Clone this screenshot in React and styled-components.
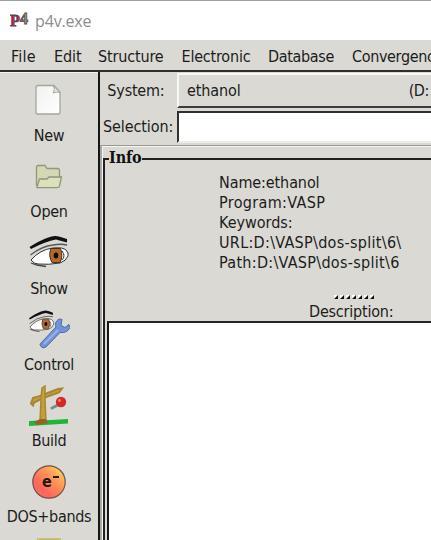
import React from "react";
import styled, { createGlobalStyle } from "styled-components";

const Global = createGlobalStyle`
  * { box-sizing: border-box; }
  html, body { margin: 0; height: 540px; overflow: hidden; background: #dad9d4; }
`;
const Window = styled.div`
  width: 431px; height: 540px; overflow: hidden;
  display: grid; grid-template-rows: 40px 30px 470px;
  background: #dad9d4; color: #1c1c1c;
  font: 16px/20px "DejaVu Sans Condensed", "DejaVu Sans", sans-serif;
  font-stretch: condensed;
`;
const TitleBar = styled.header`
  display: flex; align-items: center; gap: 5px; padding-left: 10px;
  background: #fff; border-top: 1px solid #a0a0a0; color: #8c8c8c;
  font: 16px/20px "Open Sans", sans-serif;
`;
const Label = styled.span`
  display: inline-block; white-space: nowrap;
  letter-spacing: ${(p) => p.$track ?? -0.4}px;
`;
const MenuBar = styled.nav`
  display: grid; grid-template-columns: 43px 44px 83.5px 86.5px 84px 100px;
  align-items: center; padding: 3px 0 0 11px; overflow: hidden;
`;
const Body = styled.main`
  display: grid; grid-template-columns: 98px 333px; min-height: 0;
  border-top: 2px solid #2e2e2e;
`;
const Toolbar = styled.aside`
  display: grid; grid-auto-rows: 76.3px; overflow: hidden;
  border-top: 1px solid #f4f3ef; padding-top: 7px;
`;
const Tool = styled.button`
  display: grid; grid-template-rows: 42px 20px; row-gap: 4px; align-content: start;
  place-items: center; border: 0; padding: 0; background: none; color: inherit; font: inherit;
`;
const Workspace = styled.section`
  border-left: 2px solid #161616; display: grid;
  grid-template-rows: 37px 36px 395px; min-width: 0;
`;
const Row = styled.div`
  display: grid; grid-template-columns: 74px 254px; align-items: center; padding-left: 3px;
`;
const Combo = styled.div`
  height: 35px; display: flex; align-items: center; justify-content: space-between;
  padding: 0 2px 0 8px; overflow: hidden;
  border-top: 2px solid #f7f7f3; border-left: 2px solid #f7f7f3; border-bottom: 2px solid #3b3b3b;
`;
const Entry = styled.div`
  height: 32px; background: #fff; border: 2px solid #303030; border-right: 0; border-bottom-color: #ecebe7;
`;
const Panel = styled.div`
  border-top: 1px solid #999894; border-left: 2px solid #aaa9a5;
  box-shadow: inset 1px 1px #f6f5f1; padding: 2px 0 0 1px;
`;
const Frame = styled.fieldset`
  margin: 0; padding: 0; min-width: 0; height: 394px;
  border: 2px solid #202020; border-right: 0; border-bottom: 0;
`;
const Legend = styled.legend`
  margin-left: 4px; padding: 0; height: 22px; line-height: 20px;
  font-family: "DejaVu Serif Condensed", "DejaVu Serif", serif; font-stretch: condensed;
  font-weight: 700; font-size: 16px; letter-spacing: -0.1px; color: #111;
`;
const Details = styled.div`
  display: grid; grid-auto-rows: 20px; padding: 3px 0 0 114px;
`;
const Grip = styled.div`
  display: flex; gap: 2px; margin: 22px 0 0 229px; height: 6px;
`;
const GripDot = styled.i`
  width: 4px; height: 4px;
  background: linear-gradient(135deg, #fff 48%, #111 52%);
`;
const Description = styled.div`padding: 1px 0 0 204px; height: 20px;`;
const TextArea = styled.div`
  height: 230px; margin-left: 2px; background: #fff; border-top: 2px solid #252525; border-left: 2px solid #151515;
`;

const FileIcon = () => (
  <svg width="42" height="42" viewBox="0 0 42 42">
    <defs><linearGradient id="paper" x2="1" y2="1"><stop stopColor="#f1f1ee"/><stop offset="1" stopColor="#fff"/></linearGradient></defs>
    <path d="M10 5.5h16l6 6.5v20a2 2 0 0 1-2 2H10a2 2 0 0 1-2-2v-24.5a2 2 0 0 1 2-2Z" fill="url(#paper)" stroke="#a5a79f" strokeWidth="1.3"/>
    <path d="M25.5 6q2 4-.5 7 3-1.5 7-.5Z" fill="#e8e8e3" stroke="#a5a79f"/>
  </svg>
);
const FolderIcon = () => (
  <svg width="42" height="42" viewBox="0 0 42 42">
    <path d="M8.5 30V11.5q0-2 2-2H17l2 3h10.5q2 0 2 2V28" fill="#d4d8b5" stroke="#91987a" strokeWidth="1.3"/>
    <path d="m9 31 2.5-8H19l2-2h12.5L31.500 30q-.3 1.700-2.500 1.700H10Q8.500 32 9 31Z" fill="#dce0bd" stroke="#8f9778" strokeWidth="1.3"/>
  </svg>
);
const EyeShape = () => (
  <g>
    <path d="M1.500 14C9 9.500 18 4 27 3q2-.5 12 3v3.500L28 6.500Q18 8 3 16Z" fill="#111"/>
    <path d="M3 27Q12 16.500 25 15q10-1 13 2 3 3 2 6-2 5-8 7-12 2-22 1-4 0-7-4Z" fill="#fff" stroke="#333"/>
    <path d="M2.500 22Q14 13 25 12q8-1.500 14 0" fill="none" stroke="#555" strokeWidth="1.3"/>
    <path d="M23 15.500h9.500q3 7-.5 14h-8q-4-7-1-14Z" fill="#b3682d" stroke="#463124"/>
    <ellipse cx="28" cy="22.500" rx="2.300" ry="3" fill="#120a06"/>
    <path d="M34 18q4 5 0 9" fill="none" stroke="#333"/>
    <path d="m3 30 6 2 9 1.500" fill="none" stroke="#444" strokeWidth="1.3"/>
  </g>
);
const EyeIcon = () => <svg width="42" height="42" viewBox="0 0 42 42"><EyeShape /></svg>;
const ControlIcon = () => (
  <svg width="42" height="42" viewBox="0 0 42 42">
    <g transform="translate(0 -.5) scale(.64 .69)"><EyeShape /></g>
    <path d="M13 34 28 18q-2-5 3-8l3 .5-1 6 4 2 4-3 1 3q-3 6-10 5L18 38q-3 2-5-.5t0-3.500Z" fill="#7194d8" stroke="#526ba5"/>
    <path d="m16 35 14-14" stroke="#9ab2e4" strokeWidth="2"/>
  </svg>
);
const BuildIcon = () => (
  <svg width="42" height="42" viewBox="0 0 42 42">
    <path d="m1 36 22-1 17-1v4.500L1 41Z" fill="#20b438"/>
    <path d="m5 13 7-2 18-7 4-.5-3 4-17 6-8 4-1 3-2-2Z" fill="#c6a23b" stroke="#a78731" strokeWidth="2"/>
    <path d="m14 3 3-2v14l1 22h-6l1-23Z" fill="#c5a33c" stroke="#a78731" strokeWidth="1.5"/>
    <path d="m13 16 4 4-4 4 4 4-4 4 4 4M9 13l5 0M20 9l5-1" stroke="#b89639" fill="none"/>
    <path d="m6 37 6-3h6l2 4-11 2Z" fill="#966126"/>
    <path d="m24 23 6-3" stroke="#788c8c" strokeWidth="3" strokeLinecap="round"/>
    <circle cx="33" cy="17" r="5.200" fill="#d52724"/><circle cx="31.500" cy="15.500" r="1.400" fill="#ff8170"/>
  </svg>
);
const ElectronText = styled.text`
  font-family: "DejaVu Sans", sans-serif; font-size: 16px; font-weight: 700; fill: #241614;
`;
const BandsIcon = () => (
  <svg width="42" height="42" viewBox="0 0 42 42">
    <defs><linearGradient id="electron" x1="0" y1="1" x2="1" y2="0"><stop offset=".3" stopColor="#ff675c"/><stop offset=".65" stopColor="#ff9a55"/><stop offset="1" stopColor="#fff25b"/></linearGradient></defs>
    <circle cx="21" cy="21" r="16.200" fill="url(#electron)" stroke="#6c544a" strokeWidth="1.200"/>
    <ElectronText x="14" y="26">e</ElectronText><path d="M25 16h6" stroke="#241614" strokeWidth="2"/>
  </svg>
);
const NextIcon = () => <svg width="42" height="42" viewBox="0 0 42 42"><path d="M9 0h24v8H9Z" fill="#c8bd70"/></svg>;
const LogoText = styled.text`
  font-family: "Liberation Serif", serif; font-weight: 700;
  font-size: ${(p) => p.$size}px; fill: ${(p) => p.$color}; stroke: #55465b; stroke-width: .8px;
`;
const Logo = () => (
  <svg width="20" height="24" viewBox="0 -4 20 24">
    <LogoText x="0" y="13" $size={16} $color="#c3243c">P</LogoText>
    <LogoText x="10" y="10.500" $size={16} $color="#a99a63">4</LogoText>
  </svg>
);
const tools = [
  ["New", FileIcon], ["Open", FolderIcon], ["Show", EyeIcon],
  ["Control", ControlIcon], ["Build", BuildIcon], ["DOS+bands", BandsIcon], ["", NextIcon],
];
const menus = [["File", 0.2], ["Edit", -0.1], ["Structure", -0.15], ["Electronic", -0.2], ["Database", -0.35], ["Convergence", -0.35]];
const details = [["Name:ethanol", -0.1], ["Program:VASP", 0.35], ["Keywords:", 0], ["URL:D:\\VASP\\dos-split\\6\\", 0.3], ["Path:D:\\VASP\\dos-split\\6", 0.3]];

export default function App() {
  return <><Global /><Window>
    <TitleBar><Logo /><Label $track={-0.15}>p4v.exe</Label></TitleBar>
    <MenuBar>{menus.map(([text, track]) => <Label key={text} $track={track}>{text}</Label>)}</MenuBar>
    <Body>
      <Toolbar>{tools.map(([name, Icon]) => <Tool key={name}><Icon /><Label $track={-0.3}>{name}</Label></Tool>)}</Toolbar>
      <Workspace>
        <Row><Label $track={-0.2}>&nbsp;System:</Label><Combo><Label $track={-0.1}>ethanol</Label><Label>(D:</Label></Combo></Row>
        <Row><Label $track={-0.1}>Selection:</Label><Entry /></Row>
        <Panel><Frame><Legend>Info</Legend>
          <Details>{details.map(([text, track]) => <Label key={text} $track={track}>{text}</Label>)}</Details>
          <Grip>{Array.from({ length: 7 }, (_, i) => <GripDot key={i} />)}</Grip>
          <Description><Label $track={-0.2}>Description:</Label></Description>
          <TextArea />
        </Frame></Panel>
      </Workspace>
    </Body>
  </Window></>;
}
